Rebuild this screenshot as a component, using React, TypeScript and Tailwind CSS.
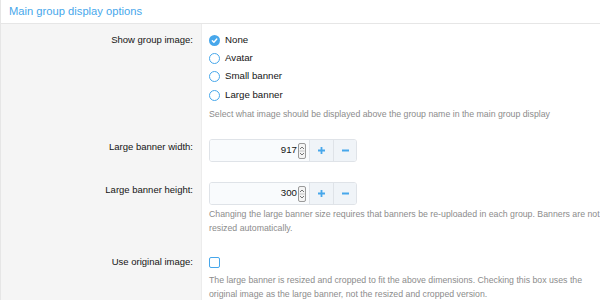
import React from "react";

const font = { fontFamily: '"Liberation Sans", Arial, sans-serif' };

function Radio({ checked, label }: { checked?: boolean; label: string }) {
  return (
    <div className="flex items-center h-[18px]">
      {checked ? (
        <span className="w-[11px] h-[11px] rounded-full bg-[#47a7eb] flex items-center justify-center">
          <svg width="7" height="7" viewBox="0 0 8 8">
            <path d="M1.5 4.2 L3.3 6 L6.6 2.2" fill="none" stroke="#fff" strokeWidth="1.6" strokeLinecap="round" strokeLinejoin="round" />
          </svg>
        </span>
      ) : (
        <span className="w-[11px] h-[11px] rounded-full border-[1.5px] border-[#47a7eb] bg-white" />
      )}
      <span className="ml-[5px] text-[9.7px] text-[#141414]">{label}</span>
    </div>
  );
}

function NumberBox({ value }: { value: string }) {
  return (
    <div className="flex w-[148px] h-[23px] border border-[#dfe3e8] rounded-[3px] overflow-hidden">
      <div className="flex-1 flex items-center justify-end bg-[#f9fbfd] pr-[3px]">
        <span className="text-[9.7px] text-[#141414]">{value}</span>
        <span className="ml-[1px] w-[8px] h-[16px] border border-[#9a9a9a] rounded-[2px] flex flex-col items-center justify-center bg-[#f4f4f4]">
          <svg width="6" height="14" viewBox="0 0 6 14">
            <path d="M1 5 L3 3 L5 5" fill="none" stroke="#666" strokeWidth="0.9" />
            <path d="M0.5 7 H5.5" stroke="#aaa" strokeWidth="0.6" />
            <path d="M1 9 L3 11 L5 9" fill="none" stroke="#666" strokeWidth="0.9" />
          </svg>
        </span>
      </div>
      <div className="w-[24px] flex items-center justify-center bg-[#f0f4f8] border-l border-[#dfe3e8]">
        <svg width="9" height="9" viewBox="0 0 9 9">
          <path d="M4.5 1 V8 M1 4.5 H8" stroke="#47a7eb" strokeWidth="1.8" />
        </svg>
      </div>
      <div className="w-[23px] flex items-center justify-center bg-[#f0f4f8] border-l border-[#dfe3e8]">
        <svg width="9" height="9" viewBox="0 0 9 9">
          <path d="M1 4.5 H8" stroke="#47a7eb" strokeWidth="1.8" />
        </svg>
      </div>
    </div>
  );
}

function Hint({ children }: { children: React.ReactNode }) {
  return <p className="text-[8.75px] leading-[14px] text-[#8c8c8c]">{children}</p>;
}

export default function App() {
  return (
    <div className="w-[600px] h-[300px] bg-white overflow-hidden border-l border-[#e6e6e6]" style={font}>
      <div className="h-[24px] border-b border-[#e6e6e6] flex items-center px-[8px]">
        <h2 className="text-[11.2px] text-[#47a7eb]">Main group display options</h2>
      </div>

      <div className="grid grid-cols-[201px_1fr]">
        {/* Show group image */}
        <div className="bg-[#f5f5f5] border-r border-[#ececec] pt-[7px] pb-[9px] pr-[8px] text-right">
          <div className="h-[18px] leading-[18px] text-[9.5px] text-[#141414]">Show group image:</div>
        </div>
        <div className="pt-[7px] pb-[9px] pl-[7px]">
          <Radio checked label="None" />
          <Radio label="Avatar" />
          <Radio label="Small banner" />
          <div className="mt-[1px]">
            <Radio label="Large banner" />
          </div>
          <div className="mt-[3px]">
            <Hint>Select what image should be displayed above the group name in the main group display</Hint>
          </div>
        </div>

        {/* Large banner width */}
        <div className="bg-[#f5f5f5] border-r border-[#ececec] pt-[9px] pb-[10px] pr-[8px] text-right">
          <div className="leading-[16px] text-[9.5px] text-[#141414]">Large banner width:</div>
        </div>
        <div className="pt-[9px] pb-[10px] pl-[7px]">
          <NumberBox value="917" />
        </div>

        {/* Large banner height */}
        <div className="bg-[#f5f5f5] border-r border-[#ececec] pt-[10px] pb-[8px] pr-[8px] text-right">
          <div className="leading-[16px] text-[9.5px] text-[#141414]">Large banner height:</div>
        </div>
        <div className="pt-[10px] pb-[8px] pl-[7px]">
          <NumberBox value="300" />
          <div className="mt-[2px]">
            <Hint>
              Changing the large banner size requires that banners be re-uploaded in each group. Banners are not
              resized automatically.
            </Hint>
          </div>
        </div>

        {/* Use original image */}
        <div className="bg-[#f5f5f5] border-r border-[#ececec] pt-[10px] pb-[10px] pr-[8px] text-right">
          <div className="h-[18px] leading-[18px] text-[9.5px] text-[#141414]">Use original image:</div>
        </div>
        <div className="pt-[10px] pb-[10px] pl-[7px]">
          <div className="h-[18px] flex items-center">
            <span className="w-[11px] h-[11px] rounded-[2px] border-[1.5px] border-[#47a7eb] bg-white" />
          </div>
          <div className="mt-[2px]">
            <Hint>
              The large banner is resized and cropped to fit the above dimensions. Checking this box uses the
              original image as the large banner, not the resized and cropped version.
            </Hint>
          </div>
        </div>
      </div>
    </div>
  );
}
